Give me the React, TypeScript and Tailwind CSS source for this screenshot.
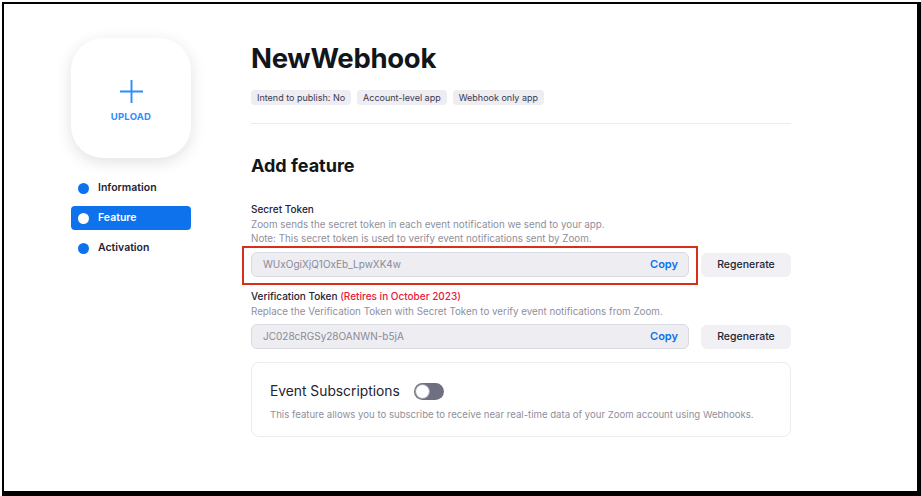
const tags = ["Intend to publish: No", "Account-level app", "Webhook only app"];

const navItems = [
  { label: "Information", active: false },
  { label: "Feature", active: true },
  { label: "Activation", active: false },
];

const TokenRow = ({ value, highlight }: { value: string; highlight?: boolean }) => (
  <div className="flex items-center gap-[12px]">
    <div className="relative w-[438px]">
      <div className="flex h-[25px] items-center justify-between rounded-[6px] border border-[#d9d9e1] bg-[#ededf2] pl-[11px] pr-[10px]">
        <span className="text-[10px] text-[#8a8a96]">{value}</span>
        <span className="text-[11px] font-semibold text-[#0e72ed]">Copy</span>
      </div>
      {highlight && (
        <div className="pointer-events-none absolute -bottom-[8px] -left-[9px] -right-[9px] -top-[6px] border-2 border-[#d6301b]" />
      )}
    </div>
    <button className="h-[24px] w-[90px] rounded-[6px] bg-[#f1f1f5] text-[10.5px] font-medium text-[#232333]">
      Regenerate
    </button>
  </div>
);

export default function App() {
  return (
    <div className="h-[496px] w-[921px] overflow-hidden bg-white pl-[2px] pt-[2px] font-['Inter',sans-serif]">
      <div className="flex h-[494px] w-[919px] border-b-[5px] border-l-2 border-r-4 border-t-2 border-black pl-[67px] pt-[34px]">
        {/* sidebar */}
        <div className="w-[120px] shrink-0">
          <div className="flex h-[120px] w-[120px] flex-col items-center rounded-[32px] bg-white pt-[42px] shadow-[0_4px_16px_rgba(0,0,0,0.12)]">
            <svg width="23" height="23" viewBox="0 0 24 24" fill="none" stroke="#2d8cff" strokeWidth="2">
              <path d="M12 0v24M0 12h24" />
            </svg>
            <span className="mt-[7px] text-[9.5px] font-bold tracking-[0.2px] text-[#2d8cff]">UPLOAD</span>
          </div>
          <div className="mt-[18px] flex flex-col gap-[6px]">
            {navItems.map((n) => (
              <div
                key={n.label}
                className={
                  n.active
                    ? "flex h-[24px] items-center gap-[9px] rounded-[4px] bg-[#0e72ed] pl-[7px]"
                    : "flex h-[24px] items-center gap-[9px] pl-[7px]"
                }
              >
                <span className={n.active ? "h-[11px] w-[11px] rounded-full bg-white" : "h-[11px] w-[11px] rounded-full bg-[#0e72ed]"} />
                <span className={n.active ? "text-[10.5px] font-semibold text-white" : "text-[10.5px] font-semibold text-[#232333]"}>
                  {n.label}
                </span>
              </div>
            ))}
          </div>
        </div>

        {/* main */}
        <div className="ml-[60px] w-[540px] pt-[3px]">
          <h1 className="text-[27.5px] font-bold leading-[34px] tracking-[-0.3px] text-[#131619]">NewWebhook</h1>
          <div className="mt-[15px] flex gap-[6px]">
            {tags.map((t) => (
              <span key={t} className="flex h-[15px] items-center rounded-[4px] bg-[#ededf2] px-[6px] text-[9px] text-[#39394d]">
                {t}
              </span>
            ))}
          </div>
          <div className="mt-[18px] h-px w-full bg-[#ececf0]" />

          <h2 className="mt-[30px] text-[18px] font-bold leading-[23px] text-[#131619]">Add feature</h2>

          <div className="mt-[24px] text-[10px] font-medium leading-[16px] text-[#232333]">Secret Token</div>
          <p className="mt-[1px] text-[9.8px] leading-[14px] text-[#8f8f9c]">
            Zoom sends the secret token in each event notification we send to your app.
            <br />
            Note: This secret token is used to verify event notifications sent by Zoom.
          </p>
          <div className="mt-[6px]">
            <TokenRow value="WUxOgiXjQ1OxEb_LpwXK4w" highlight />
          </div>

          <div className="mt-[11px] text-[10px] font-medium leading-[16px] text-[#232333]">
            Verification Token <span className="text-[#e8173d]">(Retires in October 2023)</span>
          </div>
          <p className="mt-[1px] text-[9.8px] leading-[14px] text-[#8f8f9c]">
            Replace the Verification Token with Secret Token to verify event notifications from Zoom.
          </p>
          <div className="mt-[5px]">
            <TokenRow value="JC028cRGSy28OANWN-b5jA" />
          </div>

          <div className="mt-[13px] h-[75px] rounded-[8px] border border-[#ececf0] pl-[18px] pt-[18px]">
            <div className="flex items-center gap-[14px]">
              <span className="text-[13.8px] leading-[20px] text-[#232333]">Event Subscriptions</span>
              <span className="flex h-[17px] w-[30px] items-center rounded-full bg-[#6e7081] pl-[1px]">
                <span className="h-[15px] w-[15px] rounded-full border border-[#9a9aa6] bg-white" />
              </span>
            </div>
            <p className="mt-[7px] text-[9.6px] leading-[14px] text-[#8f8f9c]">
              This feature allows you to subscribe to receive near real-time data of your Zoom account using Webhooks.
            </p>
          </div>
        </div>
      </div>
    </div>
  );
}
